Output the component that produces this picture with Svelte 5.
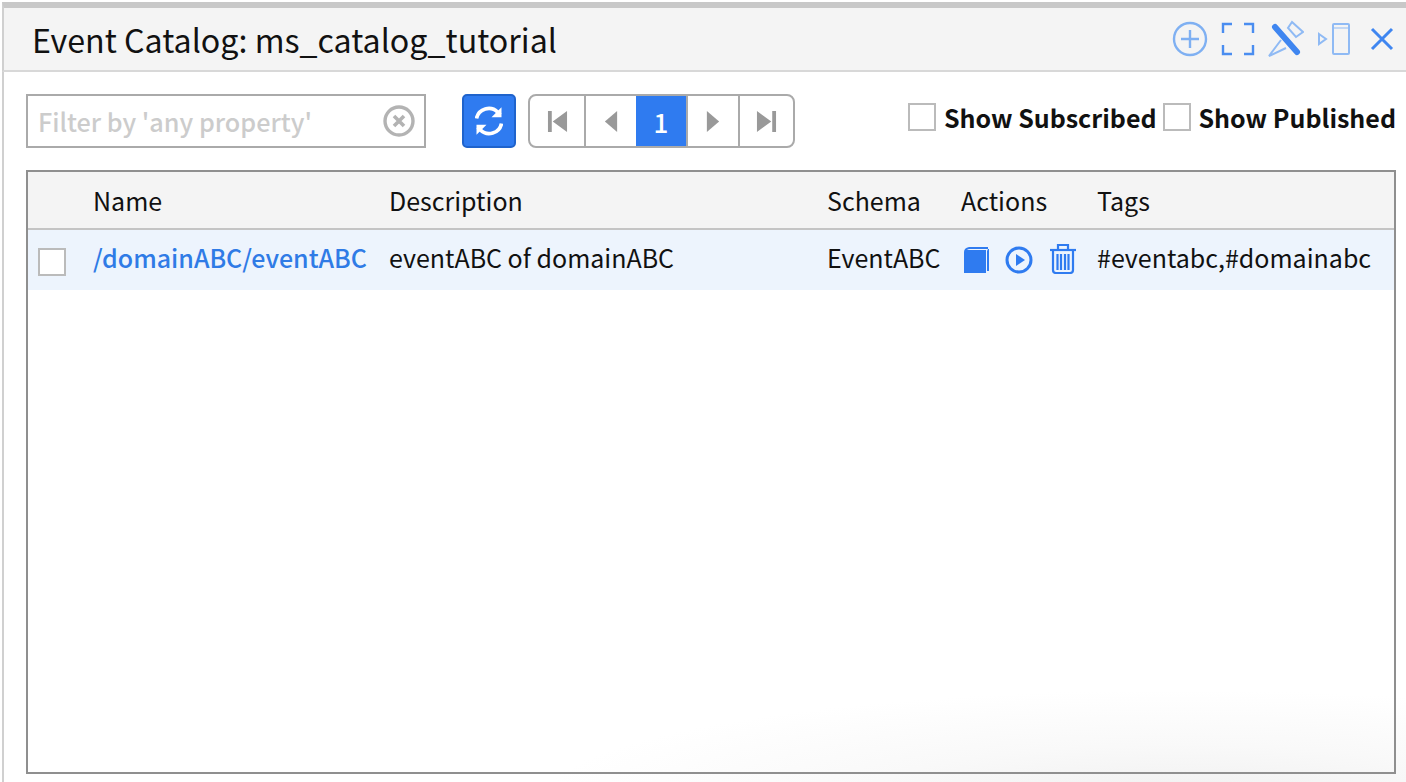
<script>
	const columns = ['', 'Name', 'Description', 'Schema', 'Actions', 'Tags'];
</script>

<div class="panel">
	<header class="title-bar">
		<h1>Event Catalog: ms_catalog_tutorial</h1>
		<div class="window-tools">
			<svg width="36" height="36" viewBox="0 0 36 36">
				<circle cx="18" cy="18" r="16" fill="none" stroke="#7fb0f2" stroke-width="2.4" />
				<path d="M18 9v18M9 18h18" stroke="#7fb0f2" stroke-width="2.4" />
			</svg>
			<svg width="34" height="34" viewBox="0 0 34 34" fill="none" stroke="#4a8df0" stroke-width="2.4">
				<path d="M2 11V2h9M23 2h9v9M32 23v9h-9M11 32H2v-9" />
			</svg>
			<svg width="36" height="38" viewBox="0 0 36 38" fill="none">
				<path d="M24 2l11 10-7 5-8-9z" stroke="#8fbaf4" stroke-width="2" />
				<path d="M13 20L1 36l17-8" stroke="#8fbaf4" stroke-width="2" />
				<path d="M7 7l22 25" stroke="#3f86f0" stroke-width="6" stroke-linecap="round" />
			</svg>
			<svg width="34" height="34" viewBox="0 0 34 34" fill="none" stroke="#8fbaf4" stroke-width="2">
				<path d="M2 12l7 5-7 5z" />
				<rect x="16" y="2" width="16" height="30" rx="1" />
				<path d="M16 6h16" stroke-width="1" />
			</svg>
			<svg class="close" width="26" height="26" viewBox="0 0 26 26" fill="none" stroke="#3f86f0" stroke-width="3">
				<path d="M3 3l20 20M23 3L3 23" />
			</svg>
		</div>
	</header>

	<div class="content">
		<div class="toolbar">
			<div class="filter">
				<span class="placeholder">Filter by 'any property'</span>
				<svg width="32" height="32" viewBox="0 0 32 32" fill="none" stroke="#b3b3b3">
					<circle cx="16" cy="16" r="14" stroke-width="3.4" />
					<path d="M11 11l10 10M21 11L11 21" stroke-width="3.6" />
				</svg>
			</div>

			<button class="refresh" aria-label="Refresh">
				<svg width="28" height="30" viewBox="4 3 22 24" fill="none" stroke="#fff" stroke-width="3">
					<path d="M5 13a10 10 0 0 1 17-5l2 2" />
					<path d="M25 4v8h-8z" fill="#fff" stroke="none" />
					<path d="M25 17a10 10 0 0 1-17 5l-2-2" />
					<path d="M5 26v-8h8z" fill="#fff" stroke="none" />
				</svg>
			</button>

			<div class="pager">
				<span class="page first">
					<svg width="21" height="21" viewBox="0 0 22 20" preserveAspectRatio="none" fill="#999"><path d="M1 0h4v20H1zM21 0v20L6 10z" /></svg>
				</span>
				<span class="page">
					<svg width="14" height="21" viewBox="0 0 16 20" preserveAspectRatio="none" fill="#999"><path d="M15 0v20L1 10z" /></svg>
				</span>
				<span class="page current">1</span>
				<span class="page">
					<svg width="14" height="21" viewBox="0 0 16 20" preserveAspectRatio="none" fill="#999"><path d="M1 0v20l14-10z" /></svg>
				</span>
				<span class="page last">
					<svg width="21" height="21" viewBox="0 0 22 20" preserveAspectRatio="none" fill="#999"><path d="M17 0h4v20h-4zM1 0v20l15-10z" /></svg>
				</span>
			</div>

			<div class="toggles">
				<label><span class="box"></span>Show Subscribed</label>
				<label><span class="box"></span>Show Published</label>
			</div>
		</div>

		<div class="table">
			<div class="row head">
				{#each columns as col}
					<div class="cell">{col}</div>
				{/each}
			</div>
			<div class="row item">
				<div class="cell check"><span class="box"></span></div>
				<div class="cell link">/domainABC/eventABC</div>
				<div class="cell">eventABC of domainABC</div>
				<div class="cell">EventABC</div>
				<div class="cell actions">
					<svg class="book" width="27" height="28" viewBox="0 0 27 28">
						<path d="M1 6q0-4 5-5h19v2H7q-2 0-3 1h19v23H1z" fill="#2f7bf0" />
						<path d="M25 3h1v22h-2V5z" fill="#2f7bf0" />
					</svg>
					<svg class="play" width="28" height="28" viewBox="0 0 28 28" fill="none">
						<circle cx="14" cy="14" r="12" stroke="#2f7bf0" stroke-width="3" />
						<path d="M11 8l9 6-9 6z" fill="#2f7bf0" />
					</svg>
					<svg class="trash" width="26" height="31" viewBox="0 0 26 31" fill="none" stroke="#2f7bf0" stroke-width="2.2">
						<path d="M0 7h26" />
						<path d="M8 6V2h10v4" />
						<path d="M3 8v19q0 3 3 3h14q3 0 3-3V8" />
						<path d="M7.5 11v16M11 11v16M15 11v16M18.5 11v16" />
					</svg>
				</div>
				<div class="cell">#eventabc,#domainabc</div>
			</div>
		</div>
	</div>
</div>

<style>
	:global(body) {
		margin: 0;
		background: #fff;
	}

	.panel {
		box-sizing: border-box;
		width: 1406px;
		height: 782px;
		padding-top: 2px;
		overflow: hidden;
		font-family: 'Noto Sans CJK JP', 'Noto Sans', sans-serif;
		color: #111;
		background: radial-gradient(ellipse 640px 110px at 1180px 800px, #f0f0f0 0%, #f9f9f9 50%, #fff 100%);
	}

	.title-bar {
		display: flex;
		align-items: center;
		justify-content: space-between;
		box-sizing: border-box;
		height: 70px;
		margin-left: 2px;
		padding: 0 11px 0 28px;
		border-top: 6px solid #c8c8c8;
		border-left: 2px solid #d0d0d0;
		border-bottom: 2px solid #d8d8d8;
		background: #f4f4f4;
	}

	h1 {
		margin: 0;
		font-size: 32.2px;
		font-weight: 400;
		line-height: 40px;
	}

	.window-tools {
		display: flex;
		align-items: center;
		gap: 13px;
	}

	.close {
		margin-left: 5px;
	}

	.content {
		box-sizing: border-box;
		height: 710px;
		margin-left: 2px;
		padding-left: 22px;
		border-left: 2px solid #d0d0d0;
	}

	.toolbar {
		display: flex;
		align-items: center;
		height: 98px;
		padding-right: 10px;
	}

	.filter {
		display: flex;
		align-items: center;
		justify-content: space-between;
		box-sizing: border-box;
		width: 400px;
		height: 54px;
		padding: 0 9px 0 10px;
		border: 2px solid #aaa;
	}

	.placeholder {
		font-size: 25.2px;
		font-weight: 500;
		color: #ccc;
	}

	.refresh {
		display: flex;
		align-items: center;
		justify-content: center;
		box-sizing: border-box;
		width: 54px;
		height: 54px;
		margin-left: 36px;
		padding: 0;
		border: 2px solid #1f63cc;
		border-radius: 5px;
		background: #2f7bf0;
	}

	.pager {
		display: flex;
		box-sizing: border-box;
		height: 54px;
		margin-left: 12px;
		border: 2px solid #aaa;
		border-radius: 8px;
		overflow: hidden;
	}

	.page {
		display: flex;
		align-items: center;
		justify-content: center;
		box-sizing: border-box;
		width: 52px;
		border-left: 2px solid #aaa;
		font-size: 26px;
		font-weight: 500;
	}

	.page.first {
		width: 54px;
		border-left: 0;
	}

	.page.last {
		width: 55px;
	}

	.page.current {
		width: 50px;
		border-left: 0;
		background: #2f7bf0;
		color: #fff;
	}

	.toggles {
		display: flex;
		gap: 6px;
		margin-left: auto;
		margin-bottom: 8px;
		font-size: 25px;
		font-weight: 700;
	}

	.toggles label {
		display: flex;
		align-items: center;
		gap: 8px;
	}

	.box {
		display: block;
		box-sizing: border-box;
		width: 28px;
		height: 28px;
		border: 2px solid #bbb;
		background: #fff;
	}

	.table {
		box-sizing: border-box;
		width: 1370px;
		height: 604px;
		border: 2px solid #8f8f8f;
	}

	.row {
		display: grid;
		grid-template-columns: 51px 296px 438px 134px 136px 1fr;
		align-items: center;
		font-size: 25px;
		line-height: 34px;
	}

	.head {
		box-sizing: border-box;
		height: 58px;
		border-bottom: 2px solid #c4c4c4;
		background: #f4f4f4;
	}

	.item {
		height: 60px;
		background: #edf4fd;
	}

	.cell {
		padding-left: 14px;
		white-space: nowrap;
	}

	.item .cell {
		padding-bottom: 6px;
	}

	.item .cell.check {
		padding: 4px 0 0 10px;
	}

	.link {
		font-weight: 500;
		color: #2f7be6;
	}

	.item .actions {
		display: flex;
		align-items: center;
		padding: 0 0 0 16px;
	}

	.play {
		margin-left: 15px;
	}

	.trash {
		margin-left: 17px;
		margin-top: -4px;
	}
</style>
